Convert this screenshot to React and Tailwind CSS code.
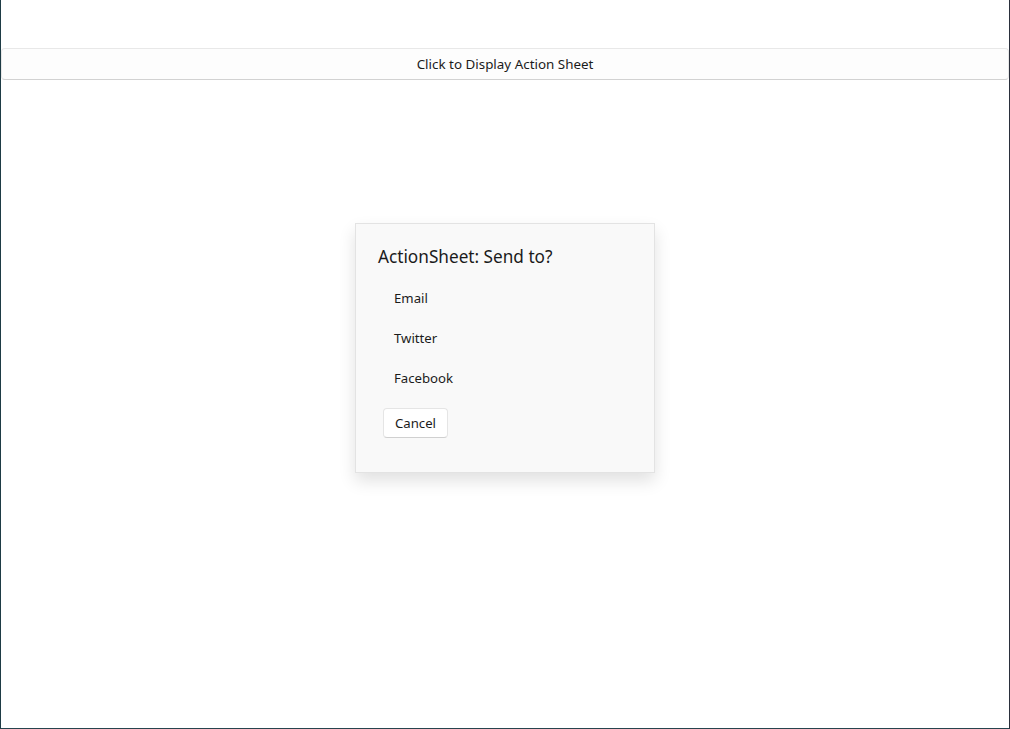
export default function App() {
  const options = ['Email', 'Twitter', 'Facebook'];

  return (
    <div
      className="relative h-[729px] w-full overflow-hidden border-b border-l border-r border-b-[#27444e] border-l-[#1e3b45] border-r-[#2a2f3b] bg-white text-[#1b1b1b]"
      style={{ fontFamily: '"Noto Sans", "Open Sans", sans-serif' }}
    >
      <div className="pt-[48px]">
        <button className="flex h-[32px] w-full items-center justify-center rounded-[4px] border border-[#e8e8e8] border-b-[#d2d2d2] bg-[#fdfdfd] pt-[2px] text-[13.4px] leading-none">
          Click to Display Action Sheet
        </button>
      </div>

      {/* action sheet dialog */}
      <div className="absolute left-[354px] top-[223px] h-[250px] w-[300px] border border-[#e3e3e3] bg-[#f9f9f9] shadow-[0_8px_16px_rgba(0,0,0,0.12)]">
        <div className="px-[22px] pt-[20px]">
          <h2 className="text-[17.2px] leading-[26px]">ActionSheet: Send to?</h2>
          <div className="mt-[9px] flex flex-col">
            {options.map(o => (
              <div key={o} className="flex h-[40px] items-center pl-[16px] text-[13.2px]">
                {o}
              </div>
            ))}
          </div>
          <button className="ml-[5px] mt-[9px] flex h-[30px] w-[65px] items-center justify-center rounded-[4px] border border-[#e5e5e5] border-b-[#d0d0d0] bg-white pt-[1px] text-[13.2px]">
            Cancel
          </button>
        </div>
      </div>
    </div>
  );
}
